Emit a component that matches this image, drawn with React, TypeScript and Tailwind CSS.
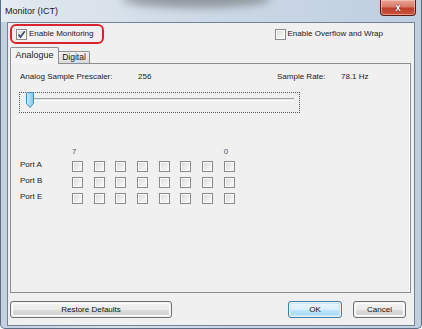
import React from "react";

function Box({ checked = false }: { checked?: boolean }) {
  return (
    <div className="w-[11px] h-[11px] border border-[#8a8b8c] bg-[#fafafa] p-px shrink-0">
      <div className="relative w-full h-full bg-[linear-gradient(135deg,#dcdde0,#f8f8f8)]">
        {checked && (
          <svg
            className="absolute -left-[2px] -top-[2px]"
            width="11"
            height="11"
            viewBox="0 0 11 11"
          >
            <path
              d="M2.5 5.5 L4.5 8 L8.8 2.3"
              fill="none"
              stroke="#3b4f7a"
              strokeWidth="1.7"
            />
          </svg>
        )}
      </div>
    </div>
  );
}

function Btn({
  children,
  w,
  focused = false,
}: {
  children: React.ReactNode;
  w: string;
  focused?: boolean;
}) {
  return (
    <div
      className={
        w +
        " h-[17px] rounded-[3px] border p-px " +
        (focused ? "border-[#3c7fb1]" : "border-[#707070]")
      }
    >
      <div
        className={
          "h-full w-full rounded-[2px] flex items-center justify-center text-[8px] leading-none text-[#111] " +
          (focused
            ? "bg-[linear-gradient(#eaf6fd_0%,#d9f0fc_50%,#bee6fd_50%,#a7d9f5_100%)] shadow-[inset_0_0_0_1px_#c6e7f9]"
            : "bg-[linear-gradient(#f2f2f2_0%,#ebebeb_50%,#dddddd_50%,#cfcfcf_100%)] shadow-[inset_0_0_0_1px_#fcfcfc]")
        }
      >
        {children}
      </div>
    </div>
  );
}

const cols = [0, 1, 2, 3, 4, 5, 6, 7];
const ports = ["Port A", "Port B", "Port E"];

export default function App() {
  return (
    <div className="relative w-[422px] h-[329px] overflow-hidden flex flex-col font-['Liberation_Sans',Arial,sans-serif] text-[#1a1a1a] bg-[linear-gradient(90deg,#c3d0de_0%,#d6e0ea_25%,#cad7e5_55%,#bfcfe0_100%)] border-x border-b border-[#5d6f84] rounded-b-[5px]">
      {/* decorative background of the glass title bar */}
      <div className="absolute left-[120px] top-[-10px] w-[150px] h-[18px] rounded-[50%] bg-[#6b6f72] opacity-60 blur-[4px]" />
      <div className="absolute left-[0px] top-[0px] w-[140px] h-[22px] bg-[linear-gradient(90deg,#e6ecf2,#d6e0ea00)]" />

      {/* title bar */}
      <div className="relative h-[22px] shrink-0 flex items-start">
        <div className="pl-[4px] pt-[6px] text-[9px] leading-[10px] text-[#1a1a1a]">
          Monitor (ICT)
        </div>
        <div className="ml-auto mr-[5px] w-[36px] h-[16px] rounded-b-[4px] border border-t-0 border-[#5a1a14] bg-[linear-gradient(#e8a493_0%,#d97a68_45%,#c2402e_55%,#c8553e_100%)] shadow-[inset_0_0_0_1px_rgba(255,220,210,0.5)] flex items-center justify-center">
          <span className="text-white text-[10px] font-bold leading-none [text-shadow:0_0_1px_#4a0d05,0_0_1px_#4a0d05]">
            x
          </span>
        </div>
      </div>

      {/* client area */}
      <div className="relative ml-[6px] w-[408px] h-[304px] border border-[#6f8297] bg-[#f0f0f0] flex flex-col shrink-0">
        {/* top row */}
        <div className="flex items-center pt-px h-[21px]">
          <div className="ml-[2px] w-[94px] h-[20px] border-2 border-[#d9232e] rounded-[6px] flex items-center pl-[4px] gap-[2px]">
            <Box checked />
            <span className="text-[8px] leading-[10px]">Enable Monitoring</span>
          </div>
          <div className="ml-auto mr-[31px] flex items-center gap-[2px]">
            <Box />
            <span className="text-[8px] leading-[10px]">Enable Overflow and Wrap</span>
          </div>
        </div>

        {/* tabs */}
        <div className="mt-[3px] ml-[2px] flex items-end h-[16px] relative z-10">
          <div className="w-[49px] h-[17px] -mb-px border border-b-0 border-[#8c8e94] rounded-t-[2px] bg-[#f3f3f3] flex items-center justify-center text-[9px] leading-none pb-[2px]">
            Analogue
          </div>
          <div className="w-[31px] h-[12px] border border-l-0 border-b-0 border-[#8c8e94] rounded-tr-[2px] bg-[linear-gradient(#f2f2f2,#dadada)] flex items-center justify-center text-[8.5px] leading-none">
            Digital
          </div>
        </div>

        {/* tab panel */}
        <div className="ml-[2px] w-[401px] h-[230px] border border-[#8c8e94] bg-[#f0f0f0] shadow-[inset_-1px_0_0_#ffffff] flex flex-col">
          <div className="mt-[8px] pl-[9px] flex text-[8px] leading-[10px] h-[10px]">
            <span className="w-[118px]">Analog Sample Prescaler:</span>
            <span className="w-[139px]">256</span>
            <span className="w-[64px]">Sample Rate:</span>
            <span>78.1 Hz</span>
          </div>

          {/* slider */}
          <div className="relative mt-[10px] ml-[8px] w-[281px] h-[21px] border border-dotted border-[#555]">
            <div className="absolute left-[10px] top-[5px] w-[264px] h-[3px] border-t border-[#a3a3a3] bg-[#e6e6e6] border-b border-b-white" />
            <svg
              className="absolute left-[6px] -top-px"
              width="8"
              height="16"
              viewBox="0 0 8 16"
            >
              <defs>
                <linearGradient id="th" x1="0" x2="1" y1="0" y2="0">
                  <stop offset="0" stopColor="#c9ecfb" />
                  <stop offset="1" stopColor="#7fc8ea" />
                </linearGradient>
              </defs>
              <path
                d="M0.5 1.5 Q0.5 0.5 1.5 0.5 H6.5 Q7.5 0.5 7.5 1.5 V11.5 L4 15.5 L0.5 11.5 Z"
                fill="url(#th)"
                stroke="#3c8cc4"
                strokeWidth="1"
              />
            </svg>
          </div>

          {/* port grid */}
          <div className="mt-[34px] pl-[9px] flex flex-col">
            <div className="flex h-[11px] text-[8px] leading-[10px] text-[#555]">
              <span className="w-[52px]" />
              {cols.map((c) => (
                <span key={c} className="w-[21.7px]">
                  {c === 0 ? "7" : c === 7 ? "0" : ""}
                </span>
              ))}
            </div>
            {ports.map((p) => (
              <div key={p} className="flex items-center h-[16px]">
                <span className="w-[52px] text-[8px] leading-[10px] pb-[3px]">{p}</span>
                {cols.map((c) => (
                  <div key={c} className="w-[21.7px]">
                    <Box />
                  </div>
                ))}
              </div>
            ))}
          </div>
        </div>

        {/* buttons */}
        <div className="mt-[8px] flex items-center">
          <div className="ml-[2px]">
            <Btn w="w-[162px]">Restore Defaults</Btn>
          </div>
          <div className="ml-auto mr-[8px] flex gap-[11px]">
            <Btn w="w-[54px]" focused>
              OK
            </Btn>
            <Btn w="w-[53px]">Cancel</Btn>
          </div>
        </div>
      </div>
    </div>
  );
}
